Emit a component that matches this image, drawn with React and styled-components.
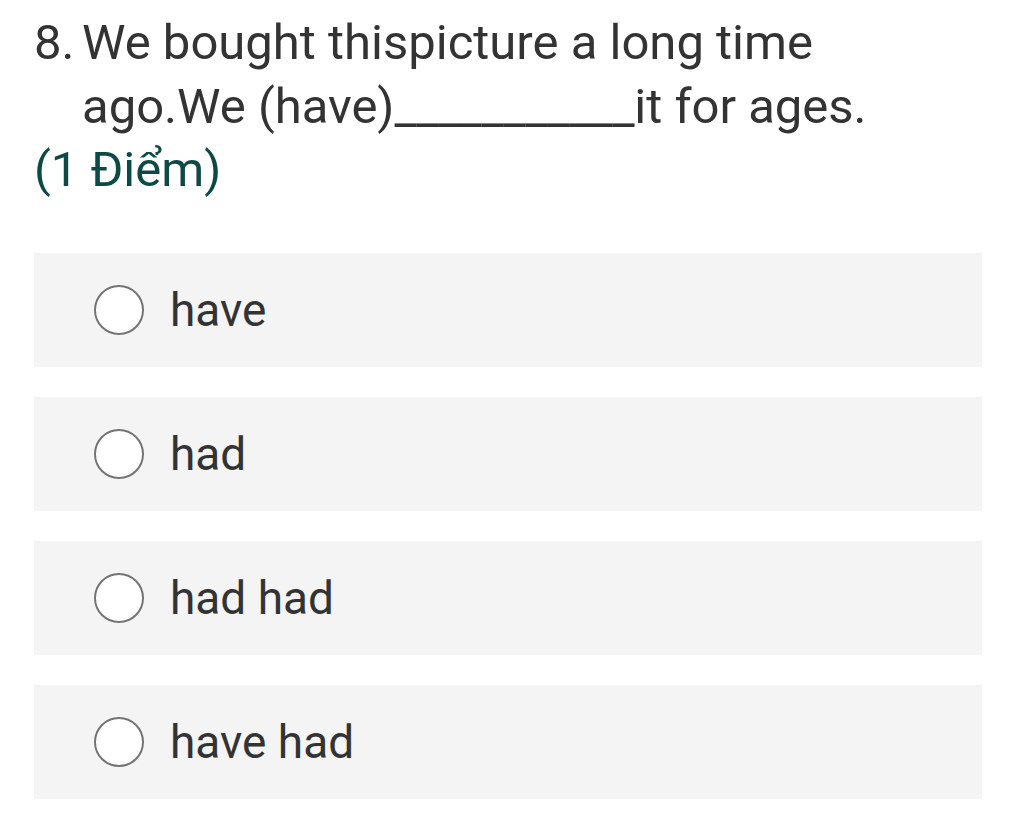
import React from "react";
import styled, { createGlobalStyle } from "styled-components";

const Global = createGlobalStyle`
  html, body { margin: 0; padding: 0; background: #ffffff; }
  body { font-family: Roboto, "Noto Sans", sans-serif; }
`;

const Page = styled.div`
  width: 1024px;
  height: 831px;
  box-sizing: border-box;
  padding: 11px 42px 0 34px;
  display: flex;
  flex-direction: column;
`;

const Question = styled.div`
  display: flex;
  font-size: 49px;
  line-height: 63.5px;
  color: #333333;
`;

const Number = styled.span`
  flex: none;
  width: 48px;
`;

const Blank = styled.span`
  letter-spacing: -0.3px;
`;

const Points = styled.div`
  font-size: 49px;
  line-height: 63.5px;
  color: #0e4a45;
  margin-bottom: 51px;
`;

const Options = styled.div`
  display: flex;
  flex-direction: column;
  gap: 30px;
`;

const Option = styled.label`
  display: flex;
  align-items: center;
  height: 114px;
  background: #f4f4f4;
  padding-left: 60px;
  gap: 26px;
  font-size: 46px;
  color: #333333;
`;

const Radio = styled.span`
  flex: none;
  width: 46px;
  height: 46px;
  border-radius: 50%;
  border: 2.5px solid #747474;
  background: #ffffff;
`;

const options = ["have", "had", "had had", "have had"];

export default function App() {
  return (
    <>
      <Global />
      <Page>
        <Question>
          <Number>8.</Number>
          <span>
            We bought thispicture a long time ago.We (have)
            <Blank>___________</Blank>it for ages.
          </span>
        </Question>
        <Points>(1 Điểm)</Points>
        <Options>
          {options.map((o) => (
            <Option key={o}>
              <Radio />
              <span>{o}</span>
            </Option>
          ))}
        </Options>
      </Page>
    </>
  );
}
